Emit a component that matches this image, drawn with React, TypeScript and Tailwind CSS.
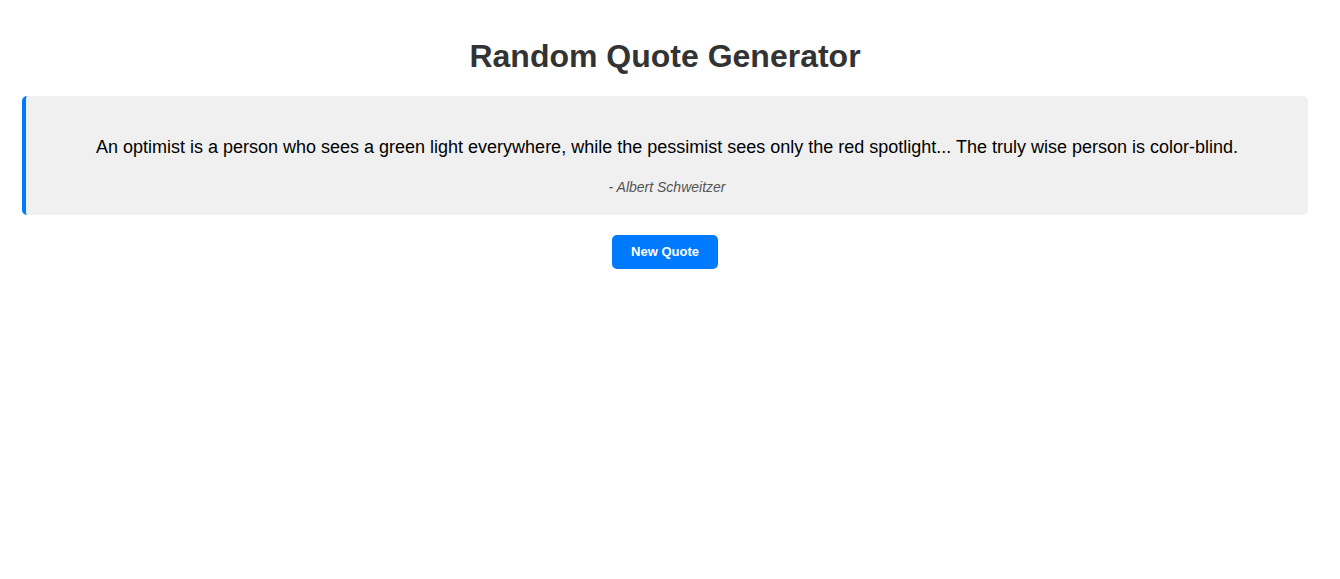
export default function App() {
  return (
    <div
      className="min-h-screen bg-white pl-[22px] pr-[32px] pt-[17px] text-center"
      style={{ fontFamily: '"Liberation Sans", Arial, sans-serif' }}
    >
      {/* Header */}
      <h1 className="my-[21px] text-[32px] font-bold leading-[37px] text-[#333]">
        Random Quote Generator
      </h1>

      {/* Quote card */}
      <div className="rounded-[5px] border-l-4 border-[#007bff] bg-[#f0f0f0] px-5 py-5">
        <p className="my-[18px] text-[18px] leading-[27px] text-black">
          An optimist is a person who sees a green light everywhere, while the pessimist sees only the red spotlight... The truly wise person is color-blind.
        </p>
        <p className="text-[14px] italic leading-[16px] text-[#555]">- Albert Schweitzer</p>
      </div>

      <button className="mt-5 h-[34px] w-[106px] rounded-[5px] bg-[#007bff] text-[13px] font-bold text-white">
        New Quote
      </button>
    </div>
  );
}
